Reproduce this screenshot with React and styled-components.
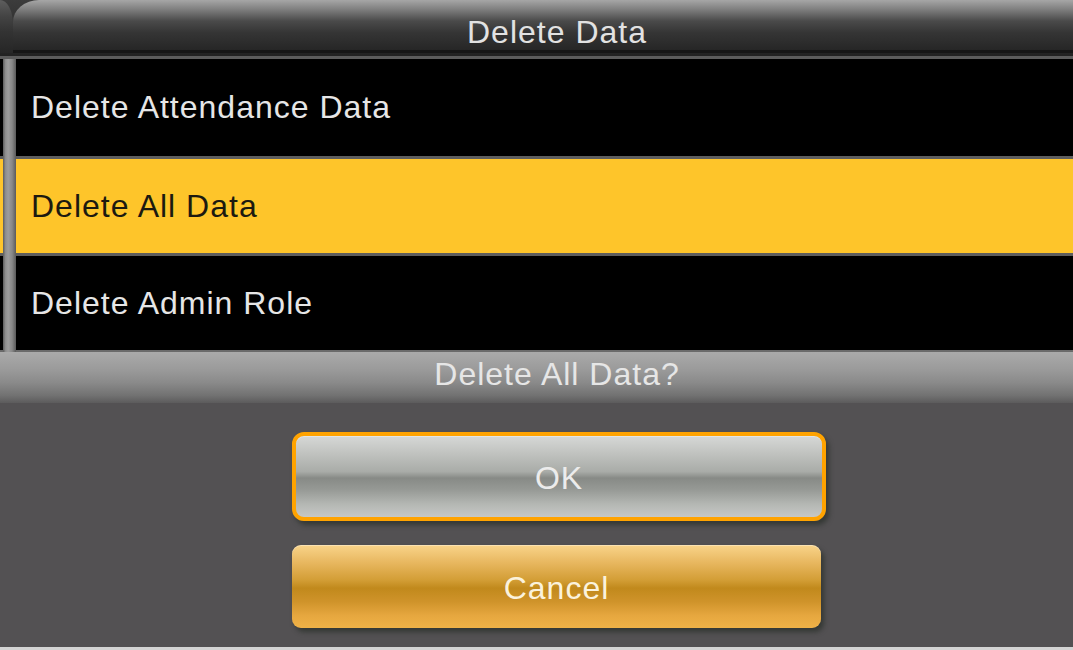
import React from 'react';
import styled, { createGlobalStyle } from 'styled-components';

const GlobalStyle = createGlobalStyle`
    html, body {
        margin: 0;
        padding: 0;
        background: #535153;
    }
    * {
        box-sizing: border-box;
    }
`

const Screen = styled.div`
    width: 1073px;
    height: 650px;
    display: flex;
    flex-direction: column;
    background: #535153;
    font-family: "Liberation Sans", Arial, sans-serif;
    font-size: 32px;
    letter-spacing: 1px;
    overflow: hidden;
`

const Header = styled.div`
    height: 59px;
    display: flex;
    background: linear-gradient(to bottom, #3c3c3c 0%, #2c2c2c 60%, #222 100%);
    border-bottom: 3px solid #5c5c5c;
`

const SideTab = styled.div`
    width: 13px;
    height: 53px;
    border-top-right-radius: 14px 26px;
    background: linear-gradient(to bottom, #5e5e5e 0%, #444 30%, #333 60%, #262626 100%);
`

const TitleBar = styled.div`
    flex: 1;
    height: 53px;
    border-top-left-radius: 26px 22px;
    background: linear-gradient(to bottom, #a6a6a6 0%, #7c7c7c 20%, #4a4a4a 42%, #353535 65%, #262626 100%);
    border-bottom: 3px solid #161616;
    display: flex;
    justify-content: center;
    padding-top: 14px;
    padding-left: 28px;
    color: #e2e2e2;
    line-height: 36px;
`

const List = styled.div`
    position: relative;
    background: #000;
    border-bottom: 2px solid #6a6a6a;
`

const Row = styled.div`
    height: 97px;
    display: flex;
    align-items: center;
    padding-left: 31px;
    background: ${props => props.selected ? '#fec52a' : '#000'};
    color: ${props => props.selected ? '#1c1a10' : '#e6e6e6'};

    & + & {
        border-top: 3px solid #5e5e5e;
    }
`

const Scrollbar = styled.div`
    position: absolute;
    left: 3px;
    top: 0;
    bottom: -2px;
    width: 13px;
    background: linear-gradient(to right, #5c5c5c 0%, #8e8e8e 20%, #9c9c9c 40%, #888 70%, #5a5a5a 100%);
`

const DialogHeader = styled.div`
    height: 51px;
    display: flex;
    justify-content: center;
    padding-top: 4px;
    padding-left: 41px;
    line-height: 36px;
    color: #e6e6e6;
    background: linear-gradient(to bottom, #aaaaaa 0%, #9a9a9a 35%, #8a8a8a 60%, #727272 85%, #5c5b5c 100%);
`

const DialogBody = styled.div`
    flex: 1;
    display: flex;
    flex-direction: column;
    align-items: flex-start;
    padding-left: 292px;
    padding-top: 29px;
    gap: 24px;
    border-bottom: 3px solid #d4d4d4;
`

const Button = styled.div`
    width: ${props => props.width}px;
    height: ${props => props.height}px;
    display: flex;
    align-items: center;
    justify-content: center;
    border-radius: ${props => props.focused ? '12px' : '9px'};
    border: ${props => props.focused ? '4px solid #ffa300' : 'none'};
    color: ${props => props.variant === 'cancel' ? '#fbf2dc' : '#ececec'};
    line-height: 1;
    padding-top: 2px;
    box-shadow: 3px 4px 5px rgba(28, 36, 28, 0.55), inset 0 1px 0 rgba(255, 255, 255, 0.35);
    background: ${props => props.variant === 'cancel'
        ? 'linear-gradient(to bottom, #f9d48a 0%, #e7b65e 22%, #d39e36 42%, #c1891c 52%, #cf932a 68%, #e6a73f 85%, #f0b247 100%)'
        : 'linear-gradient(to bottom, #d6d8d6 0%, #c0c2bf 22%, #a9aca8 44%, #878a86 52%, #969995 66%, #b4b7b3 84%, #c6c8c5 100%)'};
`

const items = [
    { label: 'Delete Attendance Data' },
    { label: 'Delete All Data', selected: true },
    { label: 'Delete Admin Role' }
]

function App() {
    return (
        <Screen>
            <GlobalStyle />
            <Header>
                <SideTab />
                <TitleBar>Delete Data</TitleBar>
            </Header>
            <List>
                {items.map(item => (
                    <Row key={item.label} selected={item.selected}>{item.label}</Row>
                ))}
                <Scrollbar />
            </List>
            <DialogHeader>Delete All Data?</DialogHeader>
            <DialogBody>
                <Button focused width={534} height={89}>OK</Button>
                <Button variant="cancel" width={529} height={83}>Cancel</Button>
            </DialogBody>
        </Screen>
    )
}

export default App
